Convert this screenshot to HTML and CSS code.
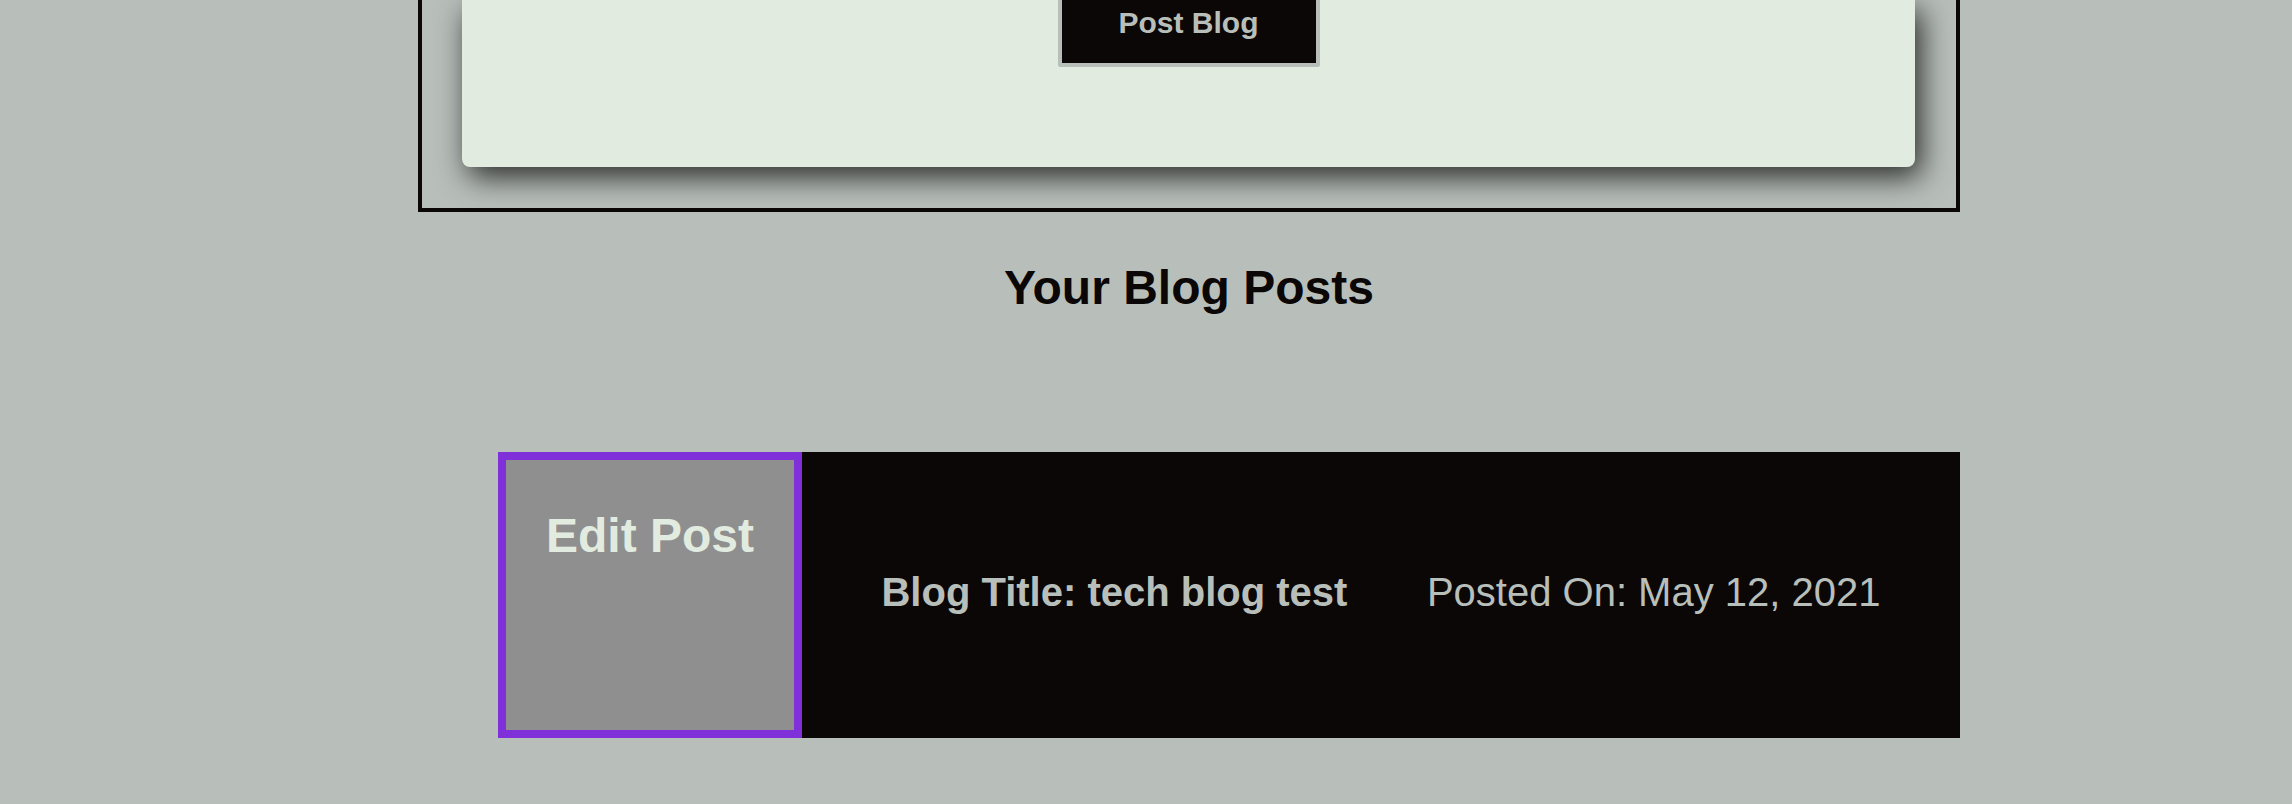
FILE: index.html
```html
<!DOCTYPE html>
<html lang="en">
<head>
<meta charset="utf-8">
<title>Dashboard</title>
<link rel="stylesheet" href="styles.css">
</head>
<body>
<main class="main">
  <section class="composer">
    <form class="card">
      <button type="button" class="post-btn">Post Blog</button>
    </form>
  </section>
  <h2 class="posts-title">Your Blog Posts</h2>
  <div class="posts">
    <article class="post">
      <a class="edit" href="#">Edit Post</a>
      <div class="info">
        <span class="post-title">Blog Title: tech blog test</span>
        <span class="post-date">Posted On: May 12, 2021</span>
      </div>
    </article>
  </div>
</main>
</body>
</html>
```
FILE: styles.css
```css
html, body {
  margin: 0;
  padding: 0;
}
body {
  background: #b8bfba;
  font-family: "Liberation Sans", Arial, Helvetica, sans-serif;
  color: #0b0706;
  height: 804px;
  overflow: hidden;
}
.main {
  margin-left: 418px;
  width: 1542px;
}
.composer {
  border: 4px solid #0b0706;
  border-top: none;
  padding: 0 41px 41px 40px;
}
.card {
  background: #e2ebe0;
  border-radius: 0 0 8px 8px;
  box-shadow: 6px 10px 30px rgba(0, 0, 0, 0.78);
  display: flex;
  flex-direction: column;
  align-items: center;
  padding-bottom: 100px;
  margin: 0;
}
.post-btn {
  background: #0b0706;
  color: #b8bfba;
  font-family: "Liberation Sans", Arial, Helvetica, sans-serif;
  font-weight: bold;
  font-size: 30px;
  line-height: 34px;
  border: 4px solid #b8bfba;
  border-top: none;
  border-radius: 0 0 3px 3px;
  padding: 6px 57px 23px;
  margin: 0;
  cursor: pointer;
}
.posts-title {
  text-align: center;
  font-size: 48px;
  line-height: 55px;
  font-weight: bold;
  margin: 48px 0 0;
}
.posts {
  margin-top: 137px;
  margin-left: 80px;
}
.post {
  display: flex;
  height: 286px;
}
.edit {
  box-sizing: border-box;
  width: 304px;
  border: 8px solid #7f30d8;
  background: #8f8f8f;
  color: #e2ebe0;
  text-decoration: none;
  font-weight: bold;
  font-size: 48px;
  line-height: 55px;
  text-align: center;
  padding-top: 48px;
}
.info {
  flex: 1;
  background: #0b0706;
  color: #b8bfba;
  display: flex;
  justify-content: space-evenly;
  align-items: center;
  font-size: 40px;
  line-height: 46px;
  padding-bottom: 6px;
}
.post-title {
  font-weight: bold;
}
.post-date {
  font-weight: normal;
}
```
